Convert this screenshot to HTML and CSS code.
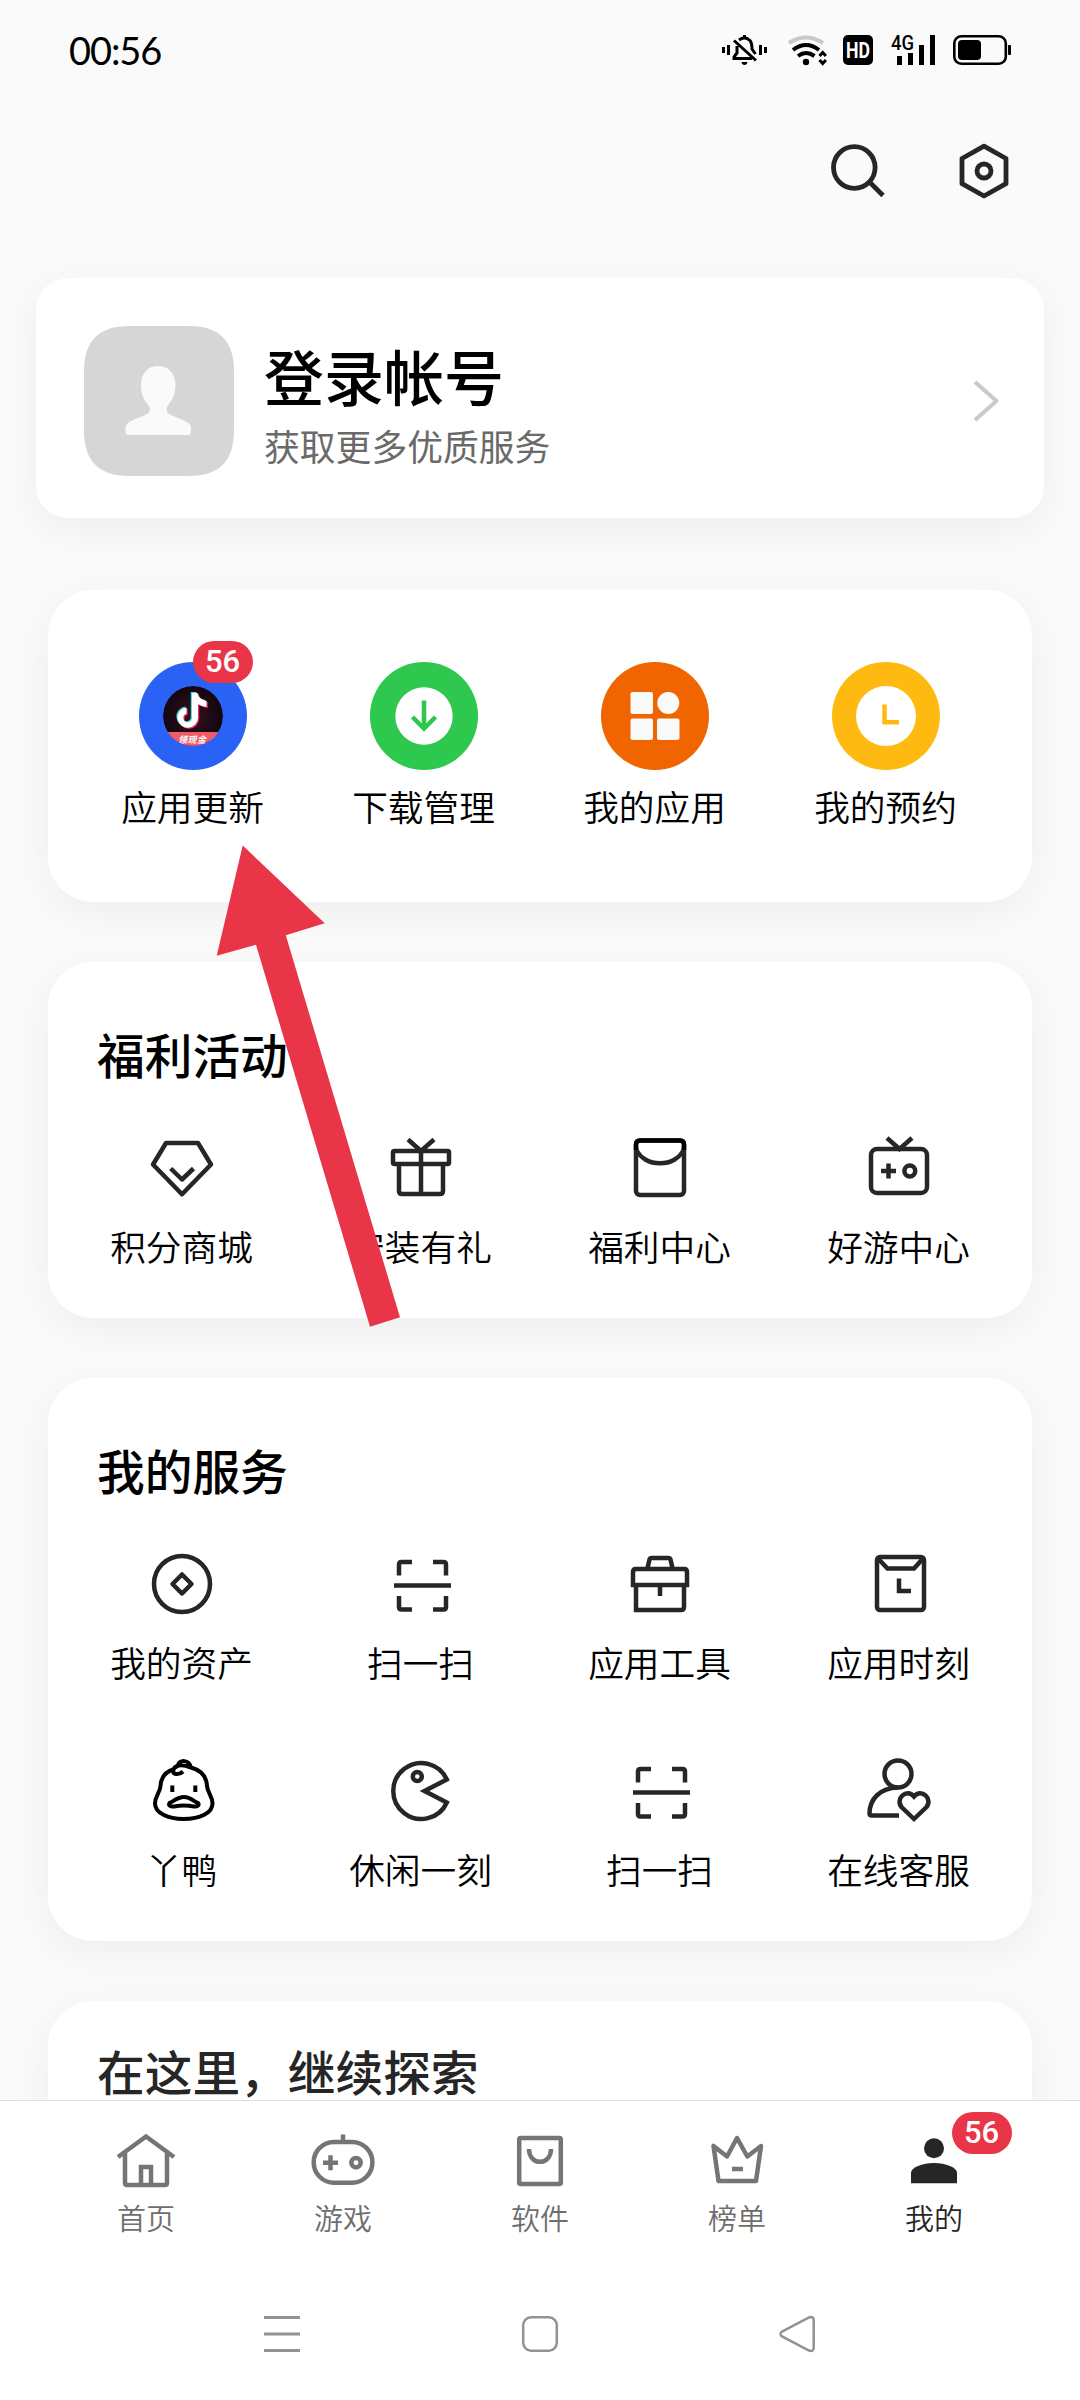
FILE: index.html
```html
<!DOCTYPE html>
<html lang="zh-CN">
<head>
<meta charset="utf-8">
<title>我的</title>
<link rel="stylesheet" href="styles.css">
</head>
<body>
<svg class="defs" width="0" height="0">
  <symbol id="scan" viewBox="0 0 72 72">
    <path d="M27 14H16.500Q14 14 14 16.500V27.500M48 14H58.500Q61 14 61 16.500V27.500M14 48V59Q14 61.500 16.500 61.500H27M61 48V59Q61 61.500 58.500 61.500H48M9 37.500H66"/>
  </symbol>
</svg>
<div class="screen">
  <main class="content">
    <header class="status">
      <span class="time">00:56</span>
      <svg class="status-icons" viewBox="720 30 294 40" width="294" height="40">
        <g fill="none" stroke="#000" stroke-width="3">
          <path d="M723.500 47v6M728.500 45v10M760.500 45v10M765.500 47v6"/>
          <path d="M734 40.500L756 60.500M737 46v7l-3 4v1.500h18M739 40Q744.500 35.500 750 40.500Q752 43 752 49L755.500 54"/>
        </g>
        <path d="M743 35h3v3h-3zM741.500 62h6q-.5 3-3 3t-3-3z"/>
        <g fill="none" stroke-width="4">
          <path d="M789 43Q806 32 823 43" stroke="#c8c8c8"/>
          <path d="M793 50Q806 40 819 50M798 56Q806 50 814.500 56" stroke="#000"/>
          <path d="M819.500 56l3.200-3.500l3.200 3.500M819.500 60l3.200 3.500l3.200-3.500" stroke="#000" stroke-width="3"/>
        </g>
        <circle cx="806" cy="62" r="3.200"/>
        <rect x="843" y="35" width="30" height="30" rx="5"/>
        <text class="hd" x="858" y="57.500" text-anchor="middle" textLength="24" lengthAdjust="spacingAndGlyphs">HD</text>
        <text class="g4" x="891" y="50" textLength="23" lengthAdjust="spacingAndGlyphs">4G</text>
        <path d="M897 56h5v9h-5zM908 53h5v12h-5zM919 45h5v20h-5zM930 35h5v30h-5z"/>
        <rect x="954.300" y="36.300" width="51.500" height="27.400" rx="7" fill="none" stroke="#000" stroke-width="2.600"/>
        <rect x="958" y="40" width="23" height="20" rx="4"/>
        <rect x="1008" y="45" width="3" height="10" rx="1"/>
      </svg>
    </header>
    <div class="toolbar">
      <svg class="tool" width="60" height="60" viewBox="827 141 60 60"><circle cx="854.300" cy="167.500" r="20.800"/><path d="M869.500 182l13.500 13.500"/></svg>
      <svg class="tool" width="60" height="60" viewBox="954 141 60 60"><path d="M984 146.200l22 12.300v25.200l-22 12.300l-22-12.300v-25.200z" stroke-linejoin="round"/><circle cx="984" cy="171" r="7"/></svg>
    </div>

    <section class="account">
      <svg class="avatar" width="150" height="150" viewBox="0 0 150 150">
        <path fill="#d6d6d6" d="M45 0H105C135 0 150 15 150 45V105C150 135 135 150 105 150H45C15 150 0 135 0 105V45C0 15 15 0 45 0Z"/>
        <path fill="#fafafa" d="M74 40C84 40 91.500 47 91.500 59C91.500 70 87 75 83 81Q81 86 87 89L99 94Q107 97 107 102V106Q107 109 104 109H44.500Q41.500 109 41.500 106V102Q41.500 97 49 94L61 89Q67.500 86 65.500 81C61 75 57 70 57 59C57 47 64 40 74 40Z"/>
      </svg>
      <div class="who">
        <h1 class="login">登录帐号</h1>
        <p class="tagline">获取更多优质服务</p>
      </div>
      <svg class="chevron" width="30" height="48" viewBox="0 0 30 48"><path d="M5 5L26.500 24L5 43" stroke-linejoin="round"/></svg>
    </section>

    <section class="card quick">
      <a class="item">
        <span class="round">
          <svg width="108" height="108" viewBox="0 0 108 108">
            <defs>
              <clipPath id="disc"><circle cx="54" cy="54" r="30"/></clipPath>
              <radialGradient id="night"><stop offset="0" stop-color="#36101f"/><stop offset="1" stop-color="#12060f"/></radialGradient>
              <path id="note" d="M53 31h5.500q1 6.500 9 8v6q-5-.5-8.500-3v13.500a10.200 10.200 0 1 1-11.500-10v6.300a4.300 4.300 0 1 0 5.500 4z"/>
            </defs>
            <circle cx="54" cy="54" r="54" fill="#2a62f5"/>
            <g clip-path="url(#disc)">
              <circle cx="54" cy="54" r="30" fill="url(#night)"/>
              <use href="#note" x="-1.200" y="-1" fill="#50dfe0"/>
              <use href="#note" x="1.200" y="1" fill="#e5335c"/>
              <use href="#note" fill="#fff"/>
              <path fill="#ef5b68" d="M24 70H80L70 86H24z"/>
              <path fill="#fff" d="M81 70l-10 9l8-1z"/>
              <text class="cash" x="39" y="80.500" textLength="28">领现金</text>
            </g>
          </svg>
          <span class="badge">56</span>
        </span>
        <span class="label">应用更新</span>
      </a>
      <a class="item">
        <svg width="108" height="108" viewBox="0 0 108 108"><circle cx="54" cy="54" r="54" fill="#2fc84e"/><circle cx="54" cy="54" r="28.700" fill="#fff"/><path d="M54 38.500V66M42.500 55L54 66.500L65.500 55" fill="none" stroke="#2fc84e" stroke-width="4.500"/></svg>
        <span class="label">下载管理</span>
      </a>
      <a class="item">
        <svg width="108" height="108" viewBox="0 0 108 108"><circle cx="54" cy="54" r="54" fill="#f06500"/><g fill="#fafafa"><rect x="29.500" y="30" width="22.500" height="22" rx="2"/><circle cx="67.300" cy="41" r="11"/><rect x="29.500" y="56.500" width="22.500" height="21.500" rx="2"/><rect x="56" y="56.500" width="22.500" height="21.500" rx="2"/></g></svg>
        <span class="label">我的应用</span>
      </a>
      <a class="item">
        <svg width="108" height="108" viewBox="0 0 108 108"><circle cx="54" cy="54" r="54" fill="#ffba12"/><circle cx="54" cy="54" r="30" fill="#fff"/><path d="M52.500 42.500V60.300H67" fill="none" stroke="#ffba12" stroke-width="4.500"/></svg>
        <span class="label">我的预约</span>
      </a>
    </section>

    <section class="card">
      <h2 class="heading">福利活动</h2>
      <div class="grid">
        <a class="item"><svg class="icon" viewBox="0 0 72 72"><path d="M20 11H52L65 32.500L36 62.300L7 32.500ZM24.700 36.500L36 47.500L47.500 36.500" stroke-linejoin="round"/></svg><span class="label">积分商城</span></a>
        <a class="item"><svg class="icon" viewBox="0 0 72 72"><rect x="8" y="19" width="56" height="13" rx="1.500"/><path d="M14 32V59Q14 62 17 62H55Q58 62 58 59V32M36 19V62M23 7.500L36 19L49 7.500"/></svg><span class="label">安装有礼</span></a>
        <a class="item"><svg class="icon" viewBox="0 0 72 72"><rect x="12" y="8.500" width="48" height="54.500" rx="4"/><path d="M12 17C20 36 52 36 60 17"/><path stroke="#000" d="M12 18V12.500Q12 8.500 16 8.500H56Q60 8.500 60 12.500V18"/></svg><span class="label">福利中心</span></a>
        <a class="item"><svg class="icon" viewBox="0 0 72 72"><rect x="8" y="17" width="56" height="44" rx="6"/><path d="M24 6L36.500 17L49 6M18 39H33M25.500 31.500V46.500"/><circle cx="46.800" cy="39" r="5.400"/></svg><span class="label">好游中心</span></a>
      </div>
    </section>

    <section class="card">
      <h2 class="heading">我的服务</h2>
      <div class="grid">
        <a class="item"><svg class="icon" viewBox="0 0 72 72"><circle cx="36" cy="36" r="28"/><path d="M36 26.500L45.500 36L36 45.500L26.500 36Z" stroke-linejoin="round"/></svg><span class="label">我的资产</span></a>
        <a class="item"><svg class="icon" viewBox="0 0 72 72"><use href="#scan"/></svg><span class="label">扫一扫</span></a>
        <a class="item"><svg class="icon" viewBox="0 0 72 72"><path d="M9 39V24Q9 21 12 21H60Q63 21 63 24V39M7 37H65M12 37V62H57Q60 62 60 59V37M23.500 20L25.500 11.500Q26 10 27.500 10H44.500Q46 10 46.500 11.500L48.500 20M36 37V48"/></svg><span class="label">应用工具</span></a>
        <a class="item"><svg class="icon" viewBox="0 0 72 72"><rect x="14" y="9" width="47" height="53" rx="3"/><path d="M15 10.500L24.500 20.500H51L60 10.500M36 30.500V43H48"/></svg><span class="label">应用时刻</span></a>
        <a class="item"><svg class="icon duck" viewBox="0 0 72 72"><path d="M28.500 14C19 16.500 15 22 14.500 31C14 38 9 41 9 48.500C9 58 22 64 37.500 64C54 64 66.500 58 66.500 48.500C66.500 41 61.500 38 61 31C60.500 20 54 15 45 12.500C38 10 34 10 31.500 11C26 13 26 18.500 30 19Q34 19.500 37 16.500M45 12.500C43 4.500 34 4 31.500 11"/><path stroke-width="4" d="M26.300 30.500V37M49.300 30.500V37"/><path d="M23.500 48C27 47 31 42 38 42C44.500 42 48.500 47 52 48C54 50 51 52 48 51.500C40 50 36 50 28 51.500C25 52 22 50.500 23.500 48Z"/></svg><span class="label">丫鸭</span></a>
        <a class="item"><svg class="icon" viewBox="0 0 72 72"><path d="M61.800 24.500A28 28 0 1 0 61.800 47.500L39.500 36Z"/><circle cx="32.300" cy="21.400" r="4.500"/></svg><span class="label">休闲一刻</span></a>
        <a class="item"><svg class="icon" viewBox="0 0 72 72"><use href="#scan"/></svg><span class="label">扫一扫</span></a>
        <a class="item"><svg class="icon" viewBox="0 0 72 72"><circle cx="35" cy="19" r="13.500"/><path d="M35 32.500C17 33 6.500 44 6.500 58.500Q6.500 60.500 9 60.500H36M51 64L38.500 52C32 44 43.500 32.500 51 41.500C58.500 32.500 70 44 63.500 52Z"/></svg><span class="label">在线客服</span></a>
      </div>
    </section>

    <section class="card explore">
      <h2 class="heading soft">在这里，继续探索</h2>
    </section>

    <svg class="pointer" width="184" height="482" viewBox="216 845 184 482"><path fill="#e93548" d="M242.700 845.500L324.700 923.300L285.800 935.300L400 1317.300L370 1326.700L256 944.700L216.700 955.700Z"/></svg>
  </main>

  <nav class="tabs">
    <a class="tab"><svg class="icon" viewBox="0 0 72 72"><path d="M8 33L36 12.500L64 33M15 29V59Q15 61 17 61H55Q57 61 57 59V29M31 61V43H41V61"/></svg>首页</a>
    <a class="tab"><svg class="icon" viewBox="0 0 72 72"><rect x="6.700" y="18" width="58.700" height="40.700" rx="20.300"/><path d="M36 10.500V18M16 38.700H31M23.500 31.200V46.200"/><circle cx="49" cy="38.700" r="4.700"/></svg>游戏</a>
    <a class="tab"><svg class="icon" viewBox="0 0 72 72"><rect x="15.200" y="14" width="41.600" height="46" rx="1.500"/><path d="M25 25C25 42 47 42 47 25"/></svg>软件</a>
    <a class="tab"><svg class="icon" viewBox="0 0 72 72"><path d="M12.500 22L17.500 57H55L60 22L46.300 32.500L36 14L26 32.500ZM31 45H42" stroke-linejoin="round"/></svg>榜单</a>
    <a class="tab active"><svg class="icon" viewBox="0 0 72 72"><circle cx="36" cy="24.300" r="10"/><path d="M13 59.300V49Q13 45 20 42Q27 39 36 39T52 42Q59 45 59 49V59.300Z"/></svg>我的<span class="badge">56</span></a>
  </nav>
  <div class="system">
    <svg width="40" height="40" viewBox="0 0 40 40"><path d="M2 3.500H38M2 20H38M2 36.500H38" stroke-width="3"/></svg>
    <svg width="40" height="40" viewBox="0 0 40 40"><rect x="3.200" y="3.200" width="33.600" height="33.600" rx="8"/></svg>
    <svg width="40" height="40" viewBox="0 0 40 40"><path d="M4 17.600L31 3.500Q35.700 2 35.700 6V34Q35.700 38 31 36.500L4 22.400Q1 20 4 17.600Z"/></svg>
  </div>
</div>
</body>
</html>
```
FILE: styles.css
```css
* { box-sizing: border-box; margin: 0; padding: 0; }
body { width: 1080px; height: 2400px; overflow: hidden; background: #fafafa; color: #000; font-family: "Noto Sans CJK SC", sans-serif; }
svg { display: block; flex: none; }
.defs { position: absolute; }
.screen { display: flex; flex-direction: column; width: 1080px; height: 2400px; }
.content { position: relative; height: 2100px; overflow: hidden; }

.status { display: flex; justify-content: space-between; align-items: center; height: 100px; padding: 0 66px 0 69px; }
.time { font: 38px/46px Lato, sans-serif; letter-spacing: -1.1px; }
.hd { font: 700 22px Roboto, sans-serif; fill: #fff; }
.g4 { font: 500 20px Roboto, sans-serif; }
.toolbar { display: flex; justify-content: flex-end; gap: 67px; height: 178px; padding: 41px 66px 0 0; }
.tool { fill: none; stroke: #262626; stroke-width: 4.8; }

.account { display: flex; align-items: center; height: 240px; margin: 0 36px 72px; padding: 6px 44px 0 48px; border-radius: 32px; background: #fff; box-shadow: 0 10px 40px rgba(0, 0, 0, 0.05); }
.who { flex: 1; padding: 8px 0 0 30px; }
.login { font-size: 60px; line-height: 74px; font-weight: 500; }
.tagline { font-size: 35.8px; line-height: 54px; color: #6a6a6a; margin-top: 6px; }
.chevron { fill: none; stroke: #cacaca; stroke-width: 4; }

.card { margin: 0 48px 60px; padding: 62px 14px 50px; border-radius: 45px; background: #fff; box-shadow: 0 10px 40px rgba(0, 0, 0, 0.05); }
.quick { display: grid; grid-template-columns: repeat(4, 1fr); padding: 72px 31px 74px 29px; }
.quick .item { gap: 14px; }
.heading { padding-left: 35px; font-size: 47.7px; line-height: 60px; font-weight: 500; }
.soft { color: #262626; line-height: 56px; }
.grid { display: grid; grid-template-columns: repeat(4, 1fr); row-gap: 71px; margin-top: 48px; }
.item { display: flex; flex-direction: column; align-items: center; gap: 20px; }
.label { font-size: 35.7px; line-height: 44px; font-weight: 350; white-space: nowrap; }
.icon { width: 72px; height: 72px; fill: none; stroke: #262626; stroke-width: 4.5; }
.duck { stroke: #000; stroke-width: 4; }
.round { position: relative; }
.cash { font: italic 700 9px "Noto Sans CJK SC", sans-serif; fill: #fff; }
.badge { position: absolute; width: 60px; height: 42px; border-radius: 21px; background: #e93548; color: #fff; font: 500 31px/42px Roboto, sans-serif; text-align: center; }
.round .badge { left: 54px; top: -21px; }
.explore { height: 200px; padding-top: 42px; }
.pointer { position: absolute; left: 216px; top: 845px; }

.tabs { display: grid; grid-template-columns: repeat(5, 197px); justify-content: center; height: 150px; padding-top: 23px; border-top: 1px solid #dedede; background: #fff; }
.tab { position: relative; display: flex; flex-direction: column; align-items: center; gap: 3px; font-size: 29px; line-height: 36px; font-weight: 350; color: #6e6e6e; }
.tab .icon { stroke: #757575; }
.active { color: #262626; }
.tab.active .icon { fill: #262626; stroke: none; }
.tab .badge { left: 116px; top: -12px; }
.system { display: flex; justify-content: center; gap: 218px; flex: 1; padding-top: 64px; background: #fff; }
.system svg { fill: none; stroke: #929292; stroke-width: 2.5; }
```
